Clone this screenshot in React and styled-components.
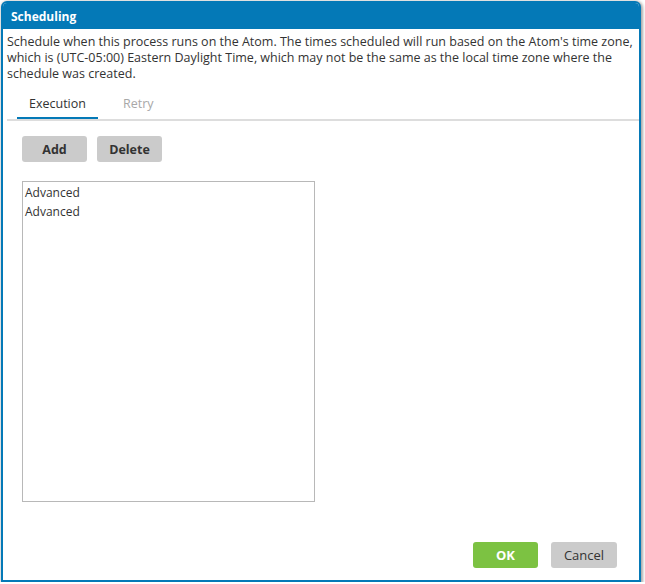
import React from 'react'
import styled, { createGlobalStyle } from 'styled-components'

const Global = createGlobalStyle`
    html, body {
        margin: 0;
        padding: 0;
        background: #ffffff;
        font-family: "Open Sans", "Noto Sans", sans-serif;
    }
    * { box-sizing: border-box; }
`

const Dialog = styled.div`
    margin: 1px 0 0 1px;
    width: 640px;
    height: 581px;
    border: 2px solid #0479b7;
    border-radius: 6px 6px 0 0;
    background: #ffffff;
    box-shadow: 1px 1px 3px 1px rgba(0, 0, 0, 0.35);
    display: flex;
    flex-direction: column;
    overflow: hidden;
`

const Header = styled.div`
    height: 26px;
    flex-shrink: 0;
    background: #0479b7;
    color: #ffffff;
    font-size: 12px;
    font-weight: 700;
    display: flex;
    align-items: center;
    padding: 0 0 0 8px;
`

const Body = styled.div`
    flex: 1;
    display: flex;
    flex-direction: column;
    padding: 5px 0 0 4px;
`

const Description = styled.p`
    margin: 0;
    font-size: 12.5px;
    line-height: 16px;
    color: #333333;
    white-space: nowrap;
`

const TabBar = styled.div`
    margin-top: 8px;
    display: flex;
    padding-left: 10px;
    border-bottom: 2px solid #dddddd;
`

const Tab = styled.div`
    height: 29px;
    padding: 0 12px 1px;
    font-size: 12.5px;
    display: flex;
    align-items: center;
    color: ${({ active }) => (active ? '#333333' : '#a8a8a8')};
    border-bottom: 2px solid ${({ active }) => (active ? '#0479b7' : 'transparent')};
    margin-right: 13px;
`

const Panel = styled.div`
    flex: 1;
    display: flex;
    flex-direction: column;
    padding: 15px 0 0 15px;
`

const Toolbar = styled.div`
    display: flex;
    gap: 10px;
`

const Button = styled.button`
    width: ${({ w }) => w || 65}px;
    height: 26px;
    border: none;
    border-radius: 3px;
    background: ${({ primary }) => (primary ? '#7cc242' : '#cbcbcb')};
    color: ${({ primary }) => (primary ? '#ffffff' : '#333333')};
    font-family: inherit;
    font-size: ${({ size }) => size || 12.5}px;
    font-weight: ${({ bold }) => (bold ? 700 : 400)};
    padding: 0;
    cursor: pointer;
`

const List = styled.div`
    margin-top: 19px;
    width: 293px;
    height: 321px;
    border: 1px solid #b8b8b8;
    padding: 1px 0 0 2px;
`

const Item = styled.div`
    font-size: 12px;
    line-height: 19px;
    color: #333333;
`

const Footer = styled.div`
    margin-top: auto;
    display: flex;
    justify-content: flex-end;
    gap: 13px;
    padding: 0 22px 12px 0;
`

export default function App() {
    return (
        <>
            <Global />
            <Dialog>
                <Header>Scheduling</Header>
                <Body>
                    <Description>
                        Schedule when this process runs on the Atom. The times scheduled will run based on the Atom's time zone,
                        <br />
                        which is (UTC-05:00) Eastern Daylight Time, which may not be the same as the local time zone where the
                        <br />
                        schedule was created.
                    </Description>
                    <TabBar>
                        <Tab active>Execution</Tab>
                        <Tab>Retry</Tab>
                    </TabBar>
                    <Panel>
                        <Toolbar>
                            <Button bold>Add</Button>
                            <Button bold>Delete</Button>
                        </Toolbar>
                        <List>
                            <Item>Advanced</Item>
                            <Item>Advanced</Item>
                        </List>
                    </Panel>
                    <Footer>
                        <Button primary bold size={13}>OK</Button>
                        <Button w={66} size={13}>Cancel</Button>
                    </Footer>
                </Body>
            </Dialog>
        </>
    )
}
